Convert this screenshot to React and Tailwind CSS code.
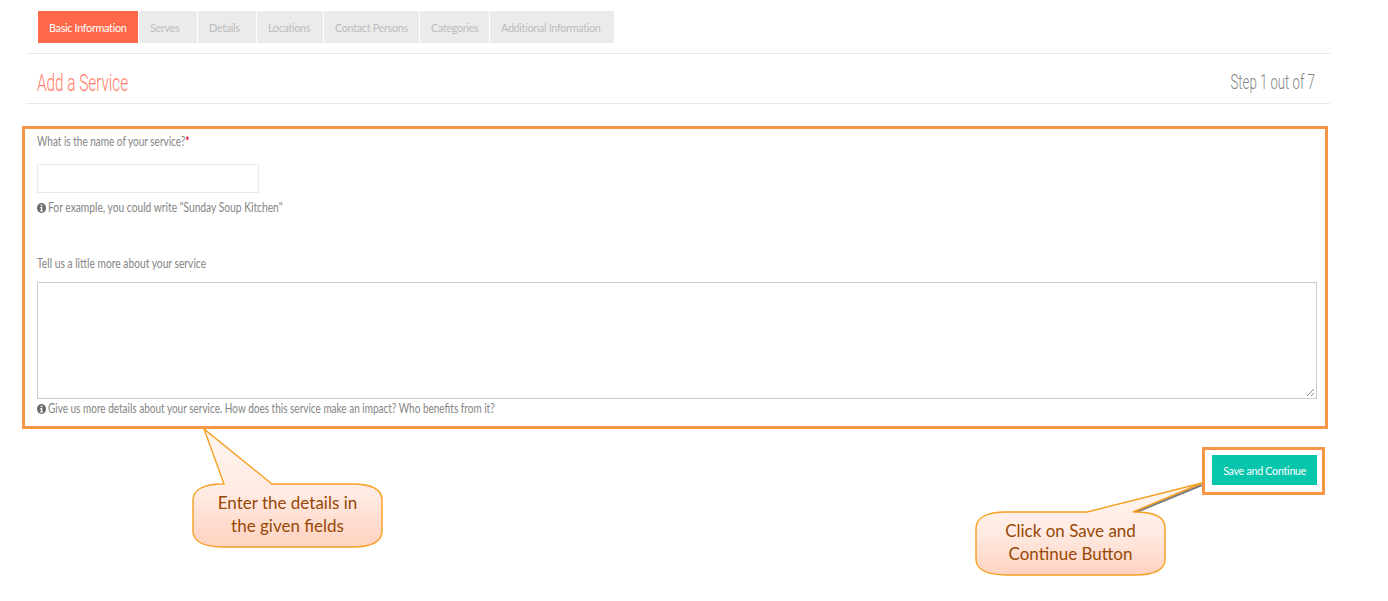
import React from "react";

const tabs = [
  ["Basic Information", "w-[100px] bg-[#ff6849] text-white"],
  ["Serves", "w-[58px] bg-[#ebebeb] text-[#bdbdbd]"],
  ["Details", "w-[58px] bg-[#ebebeb] text-[#bdbdbd]"],
  ["Locations", "w-[66px] bg-[#ebebeb] text-[#bdbdbd]"],
  ["Contact Persons", "w-[95px] bg-[#ebebeb] text-[#bdbdbd]"],
  ["Categories", "w-[69px] bg-[#ebebeb] text-[#bdbdbd]"],
  ["Additional Information", "w-[124px] bg-[#ebebeb] text-[#bdbdbd]"],
];

function Info() {
  return (
    <svg width="9" height="10" viewBox="0 0 10 10" className="shrink-0" preserveAspectRatio="none">
      <circle cx="5" cy="5" r="5" fill="#6b6b6b" />
      <rect x="4.1" y="1.6" width="1.8" height="1.6" fill="#fff" />
      <path d="M3.6 4h2.3v3.4h.7v1H3.5v-1h.7V5h-.6z" fill="#fff" />
    </svg>
  );
}

function Narrow({ wide, children }) {
  return (
    <span className={`inline-block origin-left whitespace-nowrap ${wide ? "scale-x-[0.82]" : "scale-x-[0.8]"}`}>
      {children}
    </span>
  );
}

function Callout({ className, w, h, tail, id, shadow, children }) {
  const [tipX, tipY, b1, b2] = tail;
  const path = `M30 0 H${b1} L${tipX} ${tipY} L${b2} 0 H${w - 30} C${w - 10} 0 ${w} 6 ${w} 16 V${h - 16} C${w} ${h - 6} ${w - 10} ${h} ${w - 30} ${h} H30 C10 ${h} 0 ${h - 6} 0 ${h - 16} V16 C0 6 10 0 30 0 Z`;
  return (
    <div className={`absolute ${className}`} style={{ width: w, height: h }}>
      <svg width={w} height={h} className="absolute inset-0 overflow-visible">
        <defs>
          <linearGradient id={id} gradientUnits="userSpaceOnUse" x1="0" y1={tipY} x2="0" y2={h}>
            <stop offset="0" stopColor="#fff6f2" />
            <stop offset="0.55" stopColor="#ffeae2" />
            <stop offset="1" stopColor="#ffd2c0" />
          </linearGradient>
        </defs>
        {shadow && <path d={`M${b2 + 1} 1 L${tipX} ${tipY + 2}`} stroke="#7a7a7a" strokeWidth="2" fill="none" />}
        <path d={path} fill={`url(#${id})`} stroke="#f79f1f" strokeWidth="1.4" />
      </svg>
      <div className="relative flex h-full flex-col items-center justify-center pb-[4px] font-['Lato',sans-serif] text-[17px] leading-[23px] text-[#984806]">
        {children}
      </div>
    </div>
  );
}

export default function App() {
  return (
    <div className="relative h-[601px] w-[1388px] overflow-hidden bg-white font-['Lato',sans-serif]">
      <div className="flex gap-px pl-[38px] pt-[11px]">
        {tabs.map(([t, c]) => (
          <div key={t} className={`flex h-[32px] items-center pl-[11px] pt-[1px] text-[12px] tracking-[-0.35px] ${c}`}>
            <span className="inline-block origin-left scale-x-[0.9] whitespace-nowrap">{t}</span>
          </div>
        ))}
      </div>

      <div className="ml-[26px] mt-[10px] flex h-[51px] w-[1304px] items-center justify-between border-y border-[#e4e9ec] pl-[11px] pr-[15px] pt-[6px]">
        <span className="mt-[6px] inline-block origin-left scale-x-[0.665] whitespace-nowrap font-['Roboto',sans-serif] text-[23px] font-light text-[#ff7a66]">
          Add a Service
        </span>
        <span className="inline-block origin-right scale-x-[0.66] whitespace-nowrap font-['Roboto',sans-serif] text-[20px] font-light text-[#7f8585]">
          Step 1 out of 7
        </span>
      </div>

      <div className="ml-[22px] mt-[22px] h-[303px] w-[1306px] border-[3px] border-[#f79646] pl-[12px] pr-[8px] pt-[5px] text-[12.5px] leading-[16px] text-[#858585]">
        <div>
          <Narrow>
            What is the name of your service?<span className="font-bold text-[#e8112d]">*</span>
          </Narrow>
        </div>
        <div className="mt-[14px] h-[29px] w-[222px] border border-[#e4ecef] bg-white" />
        <div className="mt-[7px] flex items-center gap-[2px]">
          <Info />
          <Narrow wide>For example, you could write "Sunday Soup Kitchen"</Narrow>
        </div>
        <div className="mt-[40px]">
          <Narrow wide>Tell us a little more about your service</Narrow>
        </div>
        <div className="relative mt-[10px] h-[117px] w-[1280px] border border-[#cccccc] bg-white">
          <svg width="9" height="9" viewBox="0 0 9 9" className="absolute bottom-px right-px">
            <path d="M1 8 8 1M5 8l3-3" stroke="#8c8c8c" strokeWidth="1" fill="none" />
          </svg>
        </div>
        <div className="mt-[2px] flex items-center gap-[2px]">
          <Info />
          <Narrow>Give us more details about your service. How does this service make an impact? Who benefits from it?</Narrow>
        </div>
      </div>

      <div className="ml-[1202px] mt-[18px] flex h-[48px] w-[123px] items-start justify-end border-[3px] border-[#f79646] pr-[5px] pt-[5px]">
        <button className="flex h-[30px] w-[105px] items-center justify-center bg-[#07c6ab] pt-[1px] text-[12px] tracking-[-0.3px] text-white">
          <span className="inline-block scale-x-[0.89] whitespace-nowrap">Save and Continue</span>
        </button>
      </div>

      <Callout id="c1" className="left-[193px] top-[484px]" w={189} h={63} tail={[11, -55, 31, 79]}>
        <span>Enter the details in</span>
        <span>the given fields</span>
      </Callout>
      <Callout id="c2" shadow className="left-[976px] top-[512px]" w={189} h={63} tail={[226, -29, 111, 157]}>
        <span>Click on Save and</span>
        <span>Continue Button</span>
      </Callout>
    </div>
  );
}
